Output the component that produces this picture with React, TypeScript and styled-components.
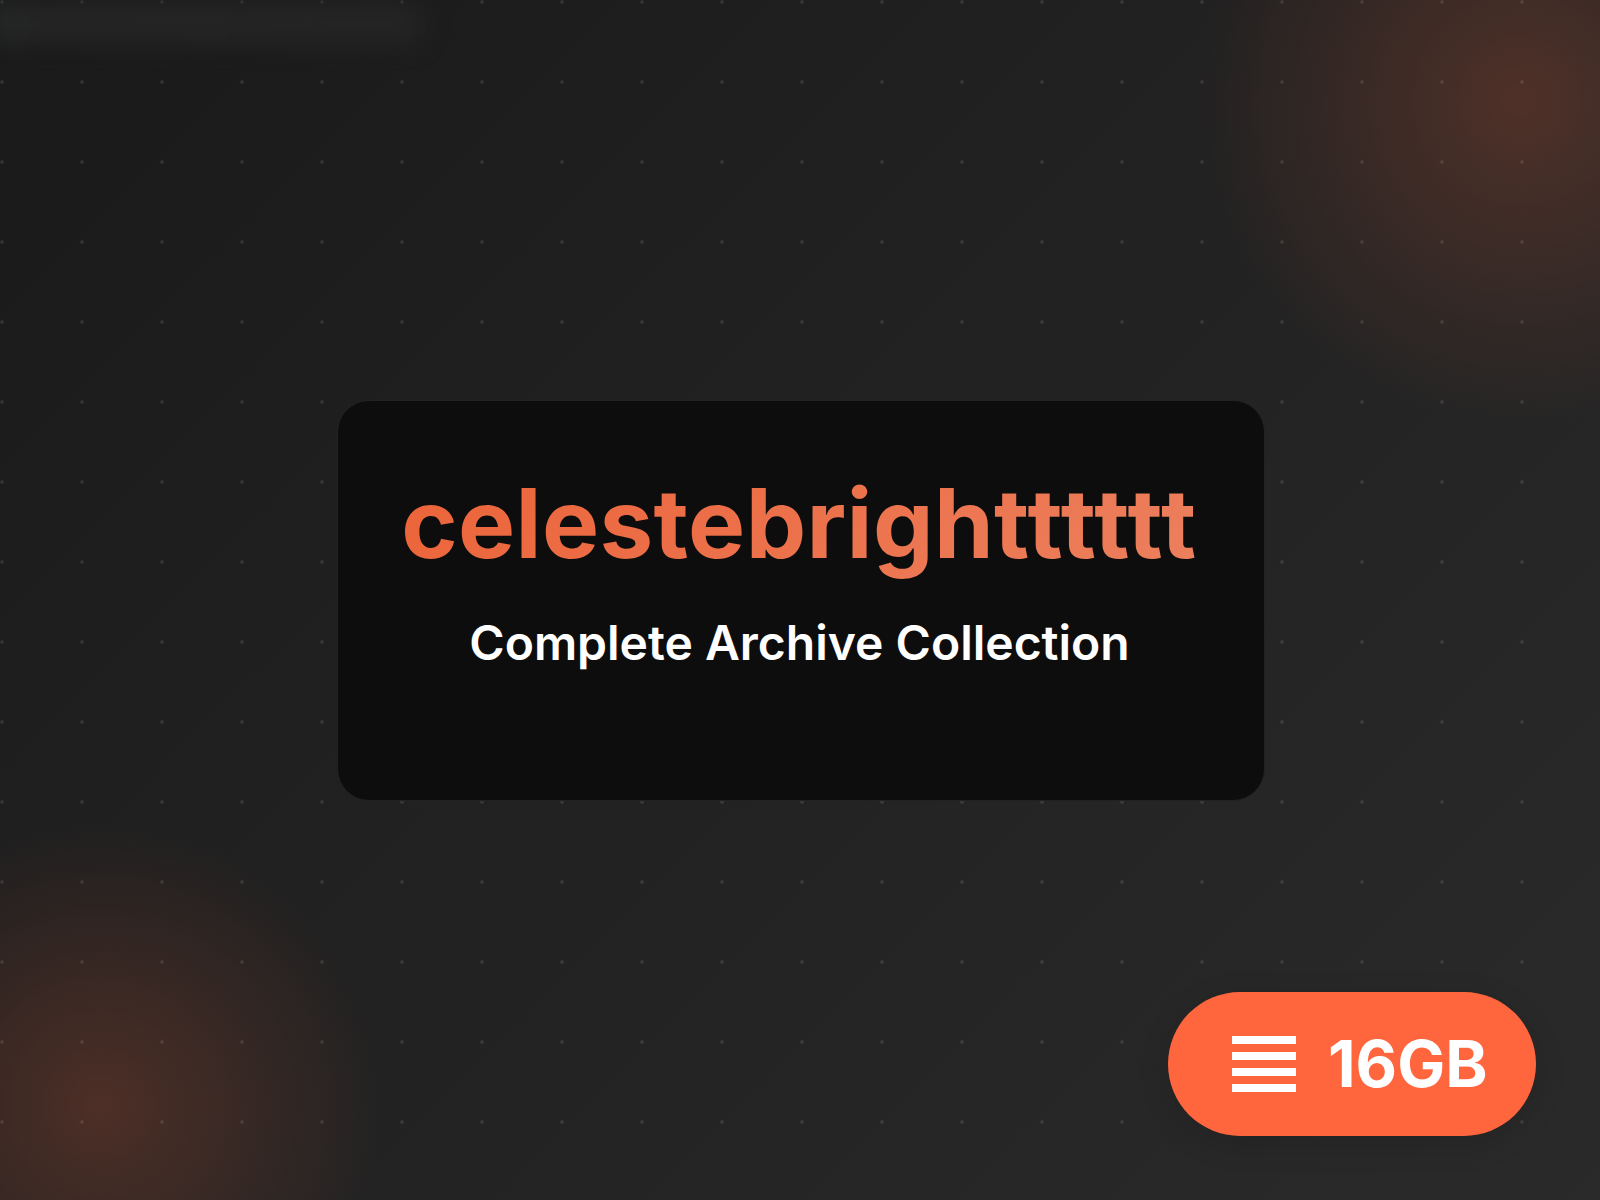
import React from "react";
import styled, { createGlobalStyle } from "styled-components";

const Global = createGlobalStyle`
  html, body { margin: 0; padding: 0; background: #1a1a1a; }
  #root { width: 1600px; height: 1200px; }
`;

const Page = styled.main`
  position: relative;
  width: 1600px;
  height: 1200px;
  overflow: hidden;
  display: flex;
  align-items: center;
  justify-content: center;
  font-family: Inter, "Liberation Sans", sans-serif;
  background: linear-gradient(135deg, #1a1a1a 0%, #2a2a2a 100%);
`;

const Glow = styled.div<{ $corner: "top" | "bottom" }>`
  position: absolute;
  ${(p) =>
    p.$corner === "top"
      ? "width: 920px; height: 920px; left: 1060px; top: -360px;"
      : "width: 800px; height: 800px; left: -300px; top: 705px;"}
  background: radial-gradient(circle, rgba(255, 102, 61, 0.2) 0%, rgba(255, 102, 61, 0) 50%);
`;

const Dots = styled.div`
  position: absolute;
  inset: 0;
  background-image: radial-gradient(circle at 2px 2px, rgba(255, 255, 255, 0.09) 2px, transparent 0);
  background-size: 80px 80px;
`;

const BlurredStrip = styled.div`
  position: absolute;
  left: -10px;
  top: 6px;
  width: 430px;
  height: 34px;
  background: linear-gradient(90deg, #2a302d 0%, #272827 10%, #272727 100%);
  filter: blur(14px);
  opacity: 0.9;
`;

const Card = styled.section`
  position: relative;
  box-sizing: border-box;
  width: 928px;
  height: 401px;
  margin-left: 1px;
  padding: 64px 2px 0 0;
  display: flex;
  flex-direction: column;
  align-items: center;
  background: #0d0d0d;
  border: 1px solid #222222;
  border-radius: 32px;
`;

const Title = styled.h1`
  margin: 0;
  font-size: 96px;
  line-height: 116px;
  font-weight: 700;
  letter-spacing: 0.33px;
  white-space: nowrap;
  background: linear-gradient(135deg, #ff6b3d 0%, #ff8a65 100%);
  -webkit-background-clip: text;
  background-clip: text;
  color: transparent;
  opacity: 0.92;
`;

const TitleTail = styled.span`
  letter-spacing: 1.6px;
`;

const Subtitle = styled.p`
  margin: 33px 0 0;
  font-size: 48px;
  line-height: 58px;
  font-weight: 600;
  color: #ffffff;
`;

const Badge = styled.div`
  position: absolute;
  right: 64px;
  bottom: 64px;
  box-sizing: border-box;
  width: 368px;
  height: 144px;
  padding-left: 64px;
  display: flex;
  align-items: center;
  gap: 32px;
  border-radius: 72px;
  background: #ff663d;
  box-shadow: 0 8px 32px rgba(0, 0, 0, 0.12);
`;

const BadgeIcon = styled.svg`
  display: block;
  width: 64px;
  height: 56px;
  flex: none;
`;

const BadgeText = styled.span`
  font-size: 64px;
  line-height: 80px;
  font-weight: 700;
  color: #ffffff;
`;

export default function App() {
  return (
    <>
      <Global />
      <Page>
        <Glow $corner="top" />
        <Glow $corner="bottom" />
        <Dots />
        <BlurredStrip />
        <Card>
          <Title>
            celestebrigh<TitleTail>tttttt</TitleTail>
          </Title>
          <Subtitle>Complete Archive Collection</Subtitle>
        </Card>
        <Badge>
          <BadgeIcon viewBox="0 0 64 56" aria-hidden="true">
            <rect x="0" y="0" width="64" height="8" fill="#fff" />
            <rect x="0" y="16" width="64" height="8" fill="#fff" />
            <rect x="0" y="32" width="64" height="8" fill="#fff" />
            <rect x="0" y="48" width="64" height="8" fill="#fff" />
          </BadgeIcon>
          <BadgeText>16GB</BadgeText>
        </Badge>
      </Page>
    </>
  );
}
